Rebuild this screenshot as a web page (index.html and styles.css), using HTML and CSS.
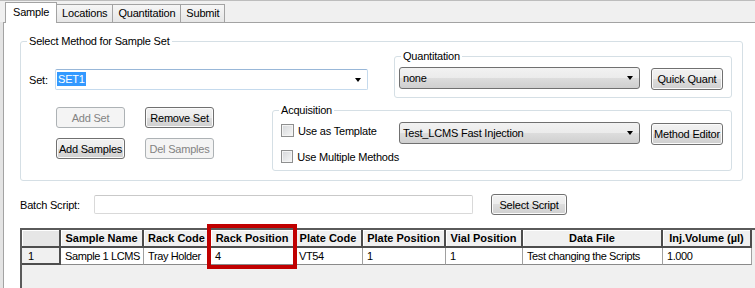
FILE: index.html
```html
<!DOCTYPE html>
<html lang="en">
<head>
  <meta charset="UTF-8">
  <meta name="viewport" content="width=device-width, initial-scale=1.0">
  <title>Sample Set</title>
  <link rel="stylesheet" href="styles.css">
</head>
<body>
  <div class="window">
    <div class="tabstrip">
      <div class="tab active">Sample</div>
      <div class="tab">Locations</div>
      <div class="tab">Quantitation</div>
      <div class="tab">Submit</div>
    </div>

    <div class="panel">
      <fieldset class="group main-group">
        <legend>Select Method for Sample Set</legend>

        <div class="row-top">
          <div class="set-field">
            <label class="set-label">Set:</label>
            <div class="combo edit set-combo"><span class="selected-text">SET1</span></div>
          </div>

          <fieldset class="group quant-group">
            <legend>Quantitation</legend>
            <div class="quant-row">
              <div class="combo drop wide-combo">none</div>
              <button class="btn side-btn">Quick Quant</button>
            </div>
          </fieldset>
        </div>

        <div class="row-bottom">
          <div class="set-buttons">
            <button class="btn" disabled>Add Set</button>
            <button class="btn">Remove Set</button>
            <button class="btn">Add Samples</button>
            <button class="btn" disabled>Del Samples</button>
          </div>

          <fieldset class="group acq-group">
            <legend>Acquisition</legend>
            <div class="acq-row">
              <label class="check check-first"><span class="box"></span>Use as Template</label>
              <div class="combo drop wide-combo method-combo">Test_LCMS Fast Injection</div>
              <button class="btn side-btn method-btn">Method Editor</button>
            </div>
            <div class="acq-row second">
              <label class="check"><span class="box"></span>Use Multiple Methods</label>
            </div>
          </fieldset>
        </div>
      </fieldset>

      <div class="batch-row">
        <label class="batch-label">Batch Script:</label>
        <input type="text" class="textbox">
        <button class="btn script-btn">Select Script</button>
      </div>

      <div class="grid-wrap">
        <div class="grid">
          <table>
            <colgroup>
              <col style="width: 39px">
              <col style="width: 83px">
              <col style="width: 67px">
              <col style="width: 84px">
              <col style="width: 68px">
              <col style="width: 83px">
              <col style="width: 77px">
              <col style="width: 140px">
              <col style="width: 89px">
            </colgroup>
            <thead>
              <tr>
                <th class="corner"></th>
                <th>Sample Name</th>
                <th>Rack Code</th>
                <th>Rack Position</th>
                <th>Plate Code</th>
                <th>Plate Position</th>
                <th>Vial Position</th>
                <th>Data File</th>
                <th>Inj.Volume (µl)</th>
              </tr>
            </thead>
            <tbody>
              <tr>
                <td class="row-head">1</td>
                <td>Sample 1 LCMS</td>
                <td>Tray Holder</td>
                <td>4</td>
                <td>VT54</td>
                <td>1</td>
                <td>1</td>
                <td>Test changing the Scripts</td>
                <td>1.000</td>
              </tr>
            </tbody>
          </table>
        </div>
        <!-- red marker drawn over the Rack Position column -->
        <div class="highlight"></div>
      </div>
    </div>
  </div>
</body>
</html>
```

FILE: styles.css
```css
* {
  box-sizing: border-box;
}
body {
  margin: 0;
  font-family: "Liberation Sans", Arial, sans-serif;
  font-size: 11px;
  letter-spacing: -0.2px;
  color: #000;
  background-color: #f0f0f0;
}
.window {
  width: 755px;
  height: 288px;
  overflow: hidden;
  padding-left: 3px;
  background-color: #e4e4e4;
}

/* tabs */
.tabstrip {
  display: flex;
  align-items: flex-end;
  height: 22px;
  margin-left: -3px;
  padding-left: 5px;
  border-top: 1px solid #bdbdbd;
  background-color: #f0f0f0;
}
.tab {
  height: 18px;
  padding: 0 5px;
  margin-right: -1px;
  line-height: 16px;
  border: 1px solid #a3a3a3;
  border-bottom: none;
  background: linear-gradient(#f6f6f6, #e6e6e6);
}
.tab.active {
  position: relative;
  z-index: 1;
  height: 21px;
  margin-bottom: -1px;
  padding: 0 7px;
  line-height: 18px;
  background: #fff;
}

.panel {
  height: 266px;
  border-top: 1px solid #a3a3a3;
  border-left: 1px solid #a3a3a3;
  background-color: #fff;
}

/* group boxes */
.group {
  margin: 0;
  padding: 0;
  border: 1px solid #d5dfe5;
  border-radius: 3px;
  min-width: 0;
}
.group legend {
  margin-left: 6px;
  padding: 0 2px;
  line-height: 13px;
}
.main-group {
  width: 723px;
  height: 146px;
  margin: 12px 0 0 16px;
}
.row-top {
  display: flex;
  align-items: flex-start;
  height: 50px;
}
.set-field {
  display: flex;
  align-items: center;
  margin: 21px 0 0 8px;
}
.set-label {
  width: 26px;
}
.quant-group {
  width: 338px;
  height: 48px;
  margin: 2px 0 0 26px;
}
.quant-row {
  display: flex;
  align-items: flex-start;
  padding: 4px 0 0 4px;
}
.row-bottom {
  display: flex;
  align-items: flex-start;
  margin-top: 6px;
}
.set-buttons {
  display: grid;
  grid-template-columns: 69px 69px;
  grid-auto-rows: 21px;
  gap: 10px 20px;
  margin: 3px 0 0 35px;
}
.acq-group {
  width: 460px;
  height: 67px;
  margin-left: 58px;
}
.acq-row {
  display: flex;
  align-items: flex-start;
  margin-top: 5px;
  padding-left: 8px;
}

/* controls */
.combo {
  position: relative;
  height: 21px;
  padding-left: 3px;
  line-height: 19px;
}
.combo.edit {
  border: 1px solid #c5daed;
  border-top-color: #98b7d8;
  border-radius: 2px;
  background-color: #fff;
}
.combo.drop {
  height: 22px;
  line-height: 20px;
  border: 1px solid #707070;
  border-radius: 3px;
  background: linear-gradient(#f2f2f2, #ebebeb 50%, #dddddd 50%, #cfcfcf);
}
.combo::after {
  content: "";
  position: absolute;
  right: 6px;
  top: 8px;
  border-top: 4px solid #000;
  border-left: 3.5px solid transparent;
  border-right: 3.5px solid transparent;
}
.set-combo {
  width: 313px;
  padding-left: 1px;
}
.selected-text {
  padding: 1px 1px;
  color: #fff;
  background-color: #3399ff;
}
.wide-combo {
  width: 241px;
}
.method-combo {
  height: 21px;
  line-height: 19px;
}
.btn {
  height: 21px;
  padding: 0;
  font-family: inherit;
  font-size: 11px;
  letter-spacing: -0.2px;
  color: #000;
  border: 1px solid #707070;
  border-radius: 3px;
  background: linear-gradient(#f2f2f2, #ebebeb 50%, #dddddd 50%, #cfcfcf);
  box-shadow: inset 0 0 0 1px #fbfbfb;
}
.btn:disabled {
  color: #838383;
  border-color: #adb2b5;
  background: #f4f4f4;
  box-shadow: none;
}
.side-btn {
  width: 72px;
  height: 22px;
  margin: 1px 0 0 11px;
}
.method-btn {
  height: 22px;
}
.check {
  display: flex;
  align-items: center;
  width: 118px;
  height: 13px;
  white-space: nowrap;
}
.check-first {
  margin-top: 2px;
}
.acq-row.second {
  margin-top: 5px;
}
.box {
  width: 13px;
  height: 13px;
  margin-right: 4px;
  border: 1px solid #8e8f8f;
  background: linear-gradient(135deg, #d4d6d9, #f7f7f7);
  box-shadow: inset 0 0 0 1px #f4f4f4;
}

/* batch script */
.batch-row {
  display: flex;
  align-items: center;
  margin: 13px 0 0 16px;
}
.batch-label {
  width: 74px;
}
.textbox {
  width: 379px;
  height: 19px;
  margin: 0;
  border: 1px solid #d9d9d9;
  border-top-color: #c9c9c9;
  border-radius: 2px;
}
.script-btn {
  width: 76px;
  margin-left: 18px;
}

/* sample grid */
.grid-wrap {
  position: relative;
  margin: 13px 0 0 16px;
}
.grid {
  width: 760px;
  height: 70px;
  border-top: 2px solid #5a5a5a;
  border-left: 2px solid #5a5a5a;
  background-color: #f0f0f0;
}
.grid table {
  table-layout: fixed;
  width: 730px;
  border-collapse: separate;
  border-spacing: 0;
}
.grid th {
  height: 18px;
  padding: 0 2px;
  font-size: 11px;
  font-weight: bold;
  letter-spacing: 0;
  text-align: center;
  white-space: nowrap;
  overflow: hidden;
  background-color: #f0f0f0;
  border-right: 2px solid #4d4d4d;
  border-bottom: 2px solid #4d4d4d;
  box-shadow: inset 1px 1px #fff;
}
.grid th.corner {
  background-color: #e6e6e6;
}
.grid td {
  height: 17px;
  padding: 0 4px;
  letter-spacing: -0.4px;
  white-space: nowrap;
  overflow: hidden;
  background-color: #fff;
  border-right: 1px solid #a0a0a0;
  border-bottom: 1px solid #8a8a8a;
}
.grid td.row-head {
  padding-left: 6px;
  background-color: #f0f0f0;
  border-right: 2px solid #4d4d4d;
  border-bottom: 2px solid #4d4d4d;
}
.highlight {
  position: absolute;
  left: 187px;
  top: -4px;
  width: 90px;
  height: 45px;
  border: 4px solid #c00000;
}
```
